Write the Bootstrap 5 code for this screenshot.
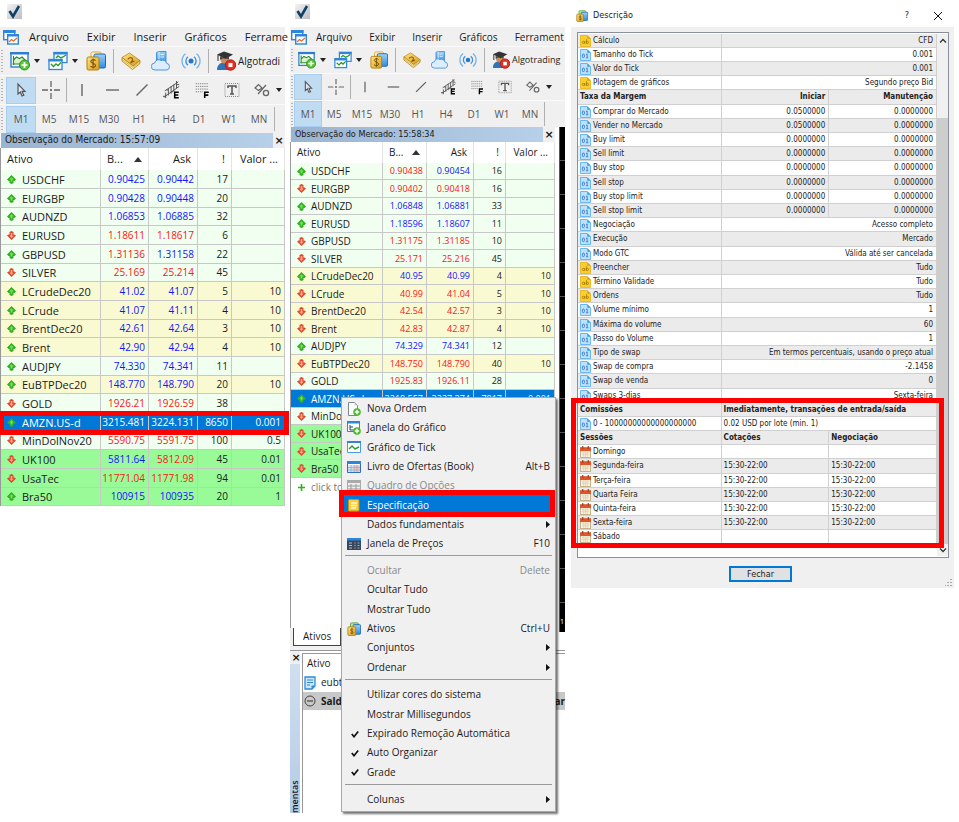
<!DOCTYPE html>
<html lang="pt-BR">
<head>
<meta charset="utf-8">
<meta name="viewport" content="width=device-width, initial-scale=1">
<title>Especificação do ativo</title>
<link href="https://cdn.jsdelivr.net/npm/bootstrap@5.3.0/dist/css/bootstrap.min.css" rel="stylesheet">
<style>
body{font-family:"Open Sans","Noto Sans",sans-serif;color:#1a1a1a;background:#fff}
.board{display:grid;grid-template-columns:285fr 275fr 384fr;column-gap:5px;min-height:100vh;padding:0 5px 9px 0}
button{border:0;background:none;padding:0;color:inherit;font:inherit}
svg{display:block;flex:none}
.win{--cell:30px;--ic:20px;--fs:11px;--num:10px;font-size:var(--fs);min-width:0}
.win.compact{--cell:28px;--ic:18px;--fs:10px;--num:9px}
.brand{height:27px;padding:4px 7px}
.compact .brand{padding-left:5px}
.menubar{background:#f0f0f0;height:19px;line-height:18px;gap:18px;padding-left:3px;white-space:nowrap}
.compact .menubar{gap:17px;padding-left:1px}
.menubar a{color:#1a1a1a;text-decoration:none}
.menubar svg{margin-right:-8px}
.bar{background:#f0f0f0;height:29px;border-top:1px solid #fafafa;white-space:nowrap}
.compact .bar{height:27px}
.grip{width:2px;height:22px;flex:none;margin-left:1px;background:repeating-linear-gradient(#b4b4b4 0 1px,transparent 1px 3px)}
.tools{gap:8px;padding-left:7px}
.compact .tools{padding-left:5px}
.tools .vsep{margin:0 -1px}
.algo{font-size:10px;gap:2px}
.compact .algo{font-size:9px}
.drop{gap:4px}
.wide{gap:10px}
.vsep{width:1px;height:24px;background:#b0b0b0;flex:none}
.cells{padding-left:3px}
.compact .cells{padding-left:1px}
.cells button{width:var(--cell);height:27px;flex:none;font-size:10px;color:#555}
.compact .cells button{height:26px}
.cells .on{background:#c0dcf3;box-shadow:inset 0 0 0 1px #a9cff0}
.frames .on{margin-right:-2px}
.cells svg.tail{margin-left:-1px}
.caption{height:15px;line-height:14px;background:linear-gradient(90deg,#99b4d1,#b9d1ea);font-family:"DejaVu Sans Condensed","Noto Sans",sans-serif;font-size:10px;padding-left:4px;margin-left:1px}
.compact .caption{font-size:9px}
.caption button,.xbtn{font:bold 11px/13px "DejaVu Sans",sans-serif;width:12px}
.caption button{background:#f0f0f0;height:15px}
.quotes{width:100%;table-layout:fixed;border-left:1px solid #999;border-collapse:separate;border-spacing:0}
.quotes th{font-weight:400;height:22px;line-height:20px;padding:0 6px;border-right:1px solid #e3e3e3;white-space:nowrap}
.compact .quotes th{height:21px;line-height:19px}
.quotes td{font-size:var(--num);line-height:17px;height:19px;padding:0 3px 0 0;border-right:1px solid #c8c8c8;border-bottom:1px solid #c8c8c8;text-align:right;white-space:nowrap}
.quotes tr:nth-child(3n) td{height:18px}
.compact .quotes tr:nth-child(odd) td{line-height:16px;height:17px}
.compact .quotes tr:nth-child(even) td{line-height:16px;height:18px}
.quotes td:first-child{font-size:var(--fs);text-align:left;padding-left:6px}
.sym{gap:6px}
.compact .sym{gap:5px}
.bg-a{background:#f0fff0}.bg-b{background:#fafad2}.bg-c{background:#98fb98}.bg-s{background:#0078d7;color:#fff}
.up{color:#1414ff}.dn{color:#ff1414}
.bg-s .up,.bg-s .dn{color:#fff}
.marked{position:relative}
.marked .frame{position:absolute;border:5px solid #f00;pointer-events:none;z-index:3}
.row-frame{inset:-2px -4px -3px -2px}
.market{position:relative;width:265px;background:#f0f0f0}
.sheet{background:#fff;border-left:1px solid #999}
.adder{color:#777;height:18px;padding-left:6px;gap:5px}
.tabline{height:22px;padding-left:3px}
.tabline button{background:#fff;border:1px solid #444;border-top:0;height:18px;padding:0 9px;margin-bottom:4px}
.chart{background:#000;width:6px;margin-bottom:18px;border-left:1px solid #555;color:#fff;font-size:7px;line-height:20px}
.ticks{background:repeating-linear-gradient(transparent 0 33px,#555 33px 34px)}
.dock{border-top:1px solid #999;min-height:163px}
.side{width:10px;background:#f0f0f0}
.side .strip{background:linear-gradient(#b4cbe6,#cfdff0);writing-mode:vertical-rl;transform:rotate(180deg);font-size:9px;line-height:10px;font-weight:600}
.orders{border:1px solid #999;margin:2px 0 0 2px;background:#fff;border-right:0;border-bottom:0}
.orders div{height:19px;padding-left:1px;gap:5px}
.orders .sum{background:#c8c8c8;font-weight:700;height:18px}
.ctx{position:absolute;left:51px;top:270px;width:215px;z-index:4;background:#f0f0f0;border:1px solid #a8a8a8;padding:1px 1px 2px;box-shadow:2px 2px 2px rgba(0,0,0,.55);margin:0;list-style:none;font-size:10px}
.ctx button{display:flex;align-items:center;width:100%;height:19px;padding:0 4px;text-align:left}
.ctx li:nth-child(3n) button{height:20px}
.ctx .ico{width:20px;flex:none}
.ctx hr{margin:2px 2px 5px;border:0;border-top:1px solid #999;opacity:1}
.ctx .sel{background:#0078d7;color:#fff}
.ctx .off{color:#888}
.item-frame{inset:-5px -1px -2px -4px}
.dlg{margin-left:1px;font-family:"DejaVu Sans Condensed","Noto Sans",sans-serif;font-size:8px;color:#222;align-self:start}
.dlg-head{height:27px;padding:5px 12px 0 5px;gap:5px;font-size:9px}
.dlg-body{background:#f0f0f0;padding:5px 5px 6px 6px;position:relative}
.listbox{border:1px solid #8a8f99;background:#fff;padding:1px 0 12px;position:relative}
.props{flex:1;table-layout:fixed;border-collapse:separate;border-spacing:0;width:100%}
.props td,.props th{height:14px;line-height:12px;padding:0 3px 0 2px;border-right:1px solid #d0d0d0;border-bottom:1px solid #d0d0d0;white-space:nowrap}
.props tr:nth-child(5n) td,.props tr:nth-child(5n) th{height:15px}
.props .num{text-align:right}
.props .name{gap:2px}
.shade{background:#ebebeb}
.block-frame{inset:-5px -7px -3px -7px}
.scroll{width:11px;background:#f0f0f0;margin-bottom:-11px}
.thumb{background:#cdcdcd;margin-top:84px;margin-bottom:12px;flex:1}
.scroll svg{position:absolute;right:1px}
.close-btn{font-size:9px;border:2px solid #0078d7;background:#e1e1e1;width:63px;height:16px;line-height:11px}
.close-row{padding:8px 5px 0 0}
.resize{position:absolute;right:2px;bottom:2px}
</style>
</head>
<body>
<svg width="0" height="0" class="position-absolute" aria-hidden="true">
<defs>
<linearGradient id="gold" x1="0" y1="0" x2="1" y2="1"><stop offset="0" stop-color="#ffe680"/><stop offset="1" stop-color="#d99a1c"/></linearGradient>
<linearGradient id="blue" x1="0" y1="0" x2="0" y2="1"><stop offset="0" stop-color="#9ad2fb"/><stop offset="1" stop-color="#2f8be0"/></linearGradient>
<linearGradient id="steel" x1="0" y1="0" x2="1" y2="1"><stop offset="0" stop-color="#f4f4f4"/><stop offset="1" stop-color="#b9bdc2"/></linearGradient>
<symbol id="logo" viewBox="0 0 15 15"><path fill="url(#steel)" d="M0 0h15v15H0z"/><path d="M2.500 7l3.500 5.500L12 2" fill="none" stroke="#123f66" stroke-width="2.600"/></symbol>
<symbol id="app" viewBox="0 0 16 16"><rect x=".7" y="1.700" width="11" height="9" fill="#fff" stroke="#2c86dd" stroke-width="1.400"/><path fill="#2c86dd" d="M0 1h12.500v3H0zM4 5h12v3H4z"/><rect x="4.700" y="6" width="10.600" height="9" fill="#fff" stroke="#2c86dd" stroke-width="1.400"/><path fill="#2c86dd" d="M4 5h12v2.500H4z"/><path d="M6 13l2.500-2.500 2 1.500 3.500-3" fill="none" stroke="#f0642d" stroke-width="1.300"/></symbol>
<symbol id="newchart" viewBox="0 0 20 20"><rect x="1" y="2" width="17" height="14" fill="#fff" stroke="#2c7fce" stroke-width="1.400"/><path fill="#2c7fce" d="M0 1h19v2.500H0z"/><path d="M4 9l3-3 3 2 2-2 4 4v3H4z" fill="#d9f2d0"/><path d="M3.500 5v9M2.500 13h13M3.500 9l3-3 3 1.500L12 6l4 4" fill="none" stroke="#2a8a2a" stroke-width="1.200"/><circle cx="14.500" cy="14" r="5" fill="#5cc43c" stroke="#2f9020"/><path d="M14.500 11v6M11.500 14h6" stroke="#fff" stroke-width="1.700"/></symbol>
<symbol id="charts" viewBox="0 0 20 20"><rect x="6" y="1.500" width="13" height="10" fill="#fff" stroke="#2c86dd" stroke-width="1.300"/><path fill="#2c86dd" d="M5.500 1h14v2.500h-14z"/><path d="M8 7l2-2 3 2 2-1 3-2" fill="none" stroke="#2a9a2a" stroke-width="1.400"/><rect x="1" y="8.500" width="13" height="10" fill="#fff" stroke="#2c86dd" stroke-width="1.300"/><path fill="#2c86dd" d="M.5 8h14v2.500H.5z"/><path d="M3 13l2.500 2.500L8 13l2 1.500 3-3" fill="none" stroke="#2a9a2a" stroke-width="1.400"/></symbol>
<symbol id="dollar" viewBox="0 0 20 20"><rect x="5" y="1" width="10" height="13" rx="1.500" fill="#fff6cf" stroke="#d9a940"/><rect x="8" y="3" width="11.500" height="14" rx="1.500" fill="url(#blue)" stroke="#1c67b8"/><rect x="1" y="6" width="12" height="13" rx="1.500" fill="url(#gold)" stroke="#b47e12"/><path d="M9.500 9.500C8 8 4.800 8.500 4.800 10.500s4.700 1.700 4.700 4-3.500 2.200-5 .7M7.100 7.500v10" fill="none" stroke="#7b5208" stroke-width="1.100"/></symbol>
<symbol id="assets" viewBox="0 0 16 16"><rect x="4" y="1" width="9" height="10" rx="1" fill="#bfe8a0" stroke="#4aa02c"/><rect x="7" y="3" width="8.500" height="11" rx="1" fill="url(#blue)" stroke="#1c67b8"/><rect x="1" y="5.500" width="9" height="9.800" rx="1" fill="url(#gold)" stroke="#b47e12"/><path d="M7.300 8.500c-1-.9-3.400-.5-3.400.8s3.400 1 3.400 2.400-2.500 1.500-3.600.5M5.600 7v7" fill="none" stroke="#7b5208" stroke-width=".9"/></symbol>
<symbol id="book" viewBox="0 0 20 20"><path d="M1 6.500L8.500 2 19 9.500 12 15z" fill="url(#gold)" stroke="#b98a1c" stroke-width=".8"/><path d="M1 6.500v3.500l10.500 8.500L19 12.500V9.500l-7 5.500z" fill="#ffe9a0" stroke="#a9780f" stroke-width=".8"/><path d="M1 8.300l10.700 8.200L19 11" fill="none" stroke="#c9992c" stroke-width=".7"/><path d="M7 8.500c0-2 4-2.500 4.500-.5s-1.500 2-1.500 3.500l3.500-1.500" fill="none" stroke="#8a5e08" stroke-width="1.200"/></symbol>
<symbol id="cloud" viewBox="0 0 20 20"><path d="M5.500 1.500L8 .5h7V13H5.500z" fill="url(#blue)" stroke="#2f80cf" stroke-width=".8"/><path d="M8 .7V11M9.500 3.500H13M9.500 6H13" stroke="#e8f5ff" stroke-width=".9"/><path d="M4 19a3.500 3.500 0 01-.3-7A4 4 0 0110 9.500a4 4 0 015.500 2.700A3.500 3.500 0 0116 19z" fill="#dceefd" stroke="#4b96da"/></symbol>
<symbol id="radio" viewBox="0 0 20 20"><circle cx="10" cy="10" r="2.500" fill="#2674d0"/><path d="M7 5.800a5.200 5.200 0 000 8.400M13 5.800a5.200 5.200 0 010 8.400" fill="none" stroke="#3f8ee0" stroke-width="1.400"/><path d="M4.500 2.800a9.200 9.200 0 000 14.400M15.500 2.800a9.200 9.200 0 010 14.400" fill="none" stroke="#79b4ec" stroke-width="1.400"/></symbol>
<symbol id="algo" viewBox="0 0 20 20"><path d="M1 19c0-5 3-7.500 7-7.500s7 2.500 7 7.500z" fill="#2f73ba"/><circle cx="8.500" cy="8.500" r="4" fill="#c98d62"/><path d="M1 3.500L8 .5 17 3.500 9.500 8z" fill="#333"/><path d="M4 5v4c2-2 6-2 9-.5V5L9.500 8z" fill="#4a4a4a"/><path d="M2 4v6" stroke="#222"/><circle cx="14.500" cy="14" r="5.200" fill="#e33022" stroke="#b31b10"/><path fill="#fff" d="M12.500 12h4v4h-4z"/></symbol>
<symbol id="cursor" viewBox="0 0 18 18"><path d="M6 3v10l2.400-2L10 15l1.800-.8-1.700-3.800H13z" fill="#dfe8f0" stroke="#555" stroke-width="1.200"/></symbol>
<symbol id="cross" viewBox="0 0 18 18"><path d="M9 0v6M9 12v6M0 9h6M12 9h6M9 8v2M8 9h2" stroke="#666" stroke-width="1.300"/></symbol>
<symbol id="vline" viewBox="0 0 18 18"><path d="M9 3v12" stroke="#666" stroke-width="1.400"/></symbol>
<symbol id="hline" viewBox="0 0 18 18"><path d="M3 9h13" stroke="#666" stroke-width="1.400"/></symbol>
<symbol id="slash" viewBox="0 0 18 18"><path d="M3.500 14.500l11-11" stroke="#666" stroke-width="1.500"/></symbol>
<symbol id="chan" viewBox="0 0 20 20"><path d="M2 11L17 1M1 18L18 6M3 13v6M6 9v7M9 6v8M12 4v8M15 0v8M0 17h3M4 10h2M9 12h2M15 4h3" stroke="#555" stroke-width="1.100"/><path d="M17.500 12.500H13v6h4.500M13 15.500h4" fill="none" stroke="#000" stroke-width="1.700"/></symbol>
<symbol id="fibo" viewBox="0 0 20 20"><path d="M3 3h14M3 6h14M3 9h14M3 12h8" stroke="#777" stroke-dasharray="1.400 1"/><path d="M13 19v-6.500h4.500M13 15.700h4" fill="none" stroke="#000" stroke-width="1.700"/></symbol>
<symbol id="txt" viewBox="0 0 18 18"><rect x="2" y="2.500" width="14" height="13" fill="none" stroke="#888" stroke-dasharray="1 1"/><path d="M5 7V5h8v2M9 5v8M7 13h4" fill="none" stroke="#555" stroke-width="1.500"/></symbol>
<symbol id="shapes" viewBox="0 0 18 18"><path d="M2 7l3.500-3.500L9 7 5.500 9.500zM5 13l8-9" fill="none" stroke="#666" stroke-width="1.200"/><circle cx="13" cy="12" r="2.600" fill="none" stroke="#666" stroke-width="1.300"/></symbol>
<symbol id="caret" viewBox="0 0 6 4"><path d="M0 0h6L3 4z" fill="#222"/></symbol>
<symbol id="up" viewBox="0 0 9 9"><path d="M4.500 0L9 4.500 7.500 6H6.500v2l-2 1-2-1V6h-1L0 4.500z" fill="#2fb01c"/><path d="M4.500 2.200L6.700 4.500H5.300v2H3.700v-2H2.300z" fill="#7bdc66"/></symbol>
<symbol id="dn" viewBox="0 0 9 9"><path d="M4.500 9L9 4.500 7.500 3.500H6.500V1l-2-1-2 1v2.500h-1L0 4.500z" fill="#e0492c"/><path d="M4.500 7L6.500 4.800H5.300V2H3.700v2.800H2.500z" fill="#ffa68e"/></symbol>
<symbol id="plus" viewBox="0 0 9 9"><path d="M4.500 1v7M1 4.500h7" stroke="#2db31c" stroke-width="1.600"/></symbol>
<symbol id="num" viewBox="0 0 12 13"><path d="M.5.500H8L11.500 4v8.500H.5z" fill="#bfe2fc" stroke="#5cb4f2"/><path d="M8 .5V4h3.500z" fill="#2e9be8"/><rect x="2.600" y="5.500" width="2.200" height="3.800" rx="1" fill="none" stroke="#2a6fc8" stroke-width=".9"/><path d="M6.500 6l1.300-.7v4M6.500 9.500H9" fill="none" stroke="#2a6fc8" stroke-width=".9"/></symbol>
<symbol id="str" viewBox="0 0 12 13"><path d="M.5.500H8L11.500 4v8.500H.5z" fill="#f9cf2f" stroke="#e8b820"/><path d="M8 .5V4h3.500z" fill="#d9a010"/><circle cx="3.700" cy="8" r="1.200" fill="none" stroke="#9c7208" stroke-width=".8"/><path d="M5.200 6.500v3M7 4.500v5" stroke="#9c7208" stroke-width=".8"/><circle cx="8.200" cy="8" r="1.200" fill="none" stroke="#9c7208" stroke-width=".8"/></symbol>
<symbol id="cal" viewBox="0 0 12 13"><rect x=".5" y="1.500" width="11" height="11" fill="#faf3e0" stroke="#c2ab84"/><path d="M0 1.500h12v4H0z" fill="#e2552a"/><path d="M3 0v3M9 0v3" stroke="#9a3312" stroke-width="1.200"/><path d="M2 7.500h8M2 9.500h8M4 6v6M6 6v6M8 6v6" stroke="#dccba8" stroke-width=".7"/></symbol>
<symbol id="doc" viewBox="0 0 14 14"><path d="M1.500.5h6l3 3v10h-9z" fill="#fff" stroke="#7a8794"/><path d="M7.500.5v3h3z" fill="#ccd"/><circle cx="10" cy="10" r="3.800" fill="#4cb82d"/><path d="M10 7.800v4.400M7.800 10h4.400" stroke="#fff" stroke-width="1.400"/></symbol>
<symbol id="win" viewBox="0 0 14 14"><path d="M.5.500h12v10H.5z" fill="#fff" stroke="#2c86dd"/><path d="M0 0h13v2.500H0z" fill="#2c86dd"/><path d="M3 4v5h4M3 6h3" fill="none" stroke="#246"/><circle cx="10" cy="10" r="3.800" fill="#4cb82d"/><path d="M10 7.800v4.400M7.800 10h4.400" stroke="#fff" stroke-width="1.400"/></symbol>
<symbol id="tick" viewBox="0 0 14 14"><path d="M.5 1.500h13v11H.5z" fill="#fff" stroke="#4d9be0"/><path d="M0 1h14v2H0z" fill="#2c86dd"/><path d="M2 9l3-3 3 3 4-2" fill="none" stroke="#2a9a2a" stroke-width="1.400"/></symbol>
<symbol id="dom" viewBox="0 0 14 14"><path d="M.5 1.500h13v11H.5z" fill="#fff" stroke="#2c6fbe"/><path d="M0 1h14v3H0z" fill="#2c86dd"/><path d="M1 5h6v7H1z" fill="#d6e8fa"/><path d="M7 5h6v7H7z" fill="#fbcabf"/><path d="M1 7.500h12M1 10h12M4 5v7M7 5v7M10 5v7" stroke="#8aa4c4" stroke-width=".7"/></symbol>
<symbol id="opts" viewBox="0 0 14 14"><path d="M.5 1.500h13v11H.5z" fill="#eee" stroke="#aaa"/><path d="M0 1h14v3H0z" fill="#aaa"/><path d="M1 7h12M1 10h12M4 5v7M9 5v7" stroke="#999"/></symbol>
<symbol id="spec" viewBox="0 0 14 14"><rect x="1.500" y="1.500" width="10.500" height="11.500" rx="1" fill="#f8cf3a" stroke="#c98f12"/><path d="M4 5h6M4 7.500h6M4 10h5" stroke="#fff8dc" stroke-width="1.300"/></symbol>
<symbol id="prices" viewBox="0 0 14 14"><path d="M0 1h14v12H0z" fill="#35485c"/><path d="M0 1h14v2.500H0z" fill="#2c86dd"/><path d="M2 6h3M2 8.500h3M2 11h3" stroke="#9cc3ea"/><path d="M7 6h2M7 8.500h2M7 11h2" stroke="#c66"/><path d="M10.500 6h2M10.500 8.500h2M10.500 11h2" stroke="#8ab"/></symbol>
<symbol id="check" viewBox="0 0 8 8"><path d="M.8 4l2.200 2.700L7.200 1.500" fill="none" stroke="#111" stroke-width="1.700"/></symbol>
<symbol id="arrow" viewBox="0 0 4 7"><path d="M0 0l4 3.500L0 7z" fill="#111"/></symbol>
<symbol id="page" viewBox="0 0 12 14"><path d="M1 1h10v9l-3 3H1z" fill="#cfe7fb" stroke="#2e8bd8" stroke-width="1.300"/><path d="M3 4h6M3 6.500h6M3 9h3" stroke="#2e8bd8"/><path d="M11 9.500H7.500V13z" fill="#2e8bd8"/></symbol>
<symbol id="minus" viewBox="0 0 12 12"><circle cx="6" cy="6" r="5" fill="none" stroke="#444"/><path d="M3 6h6" stroke="#444" stroke-width="1.200"/></symbol>
</defs>
</svg>

<main class="board">
  <section class="win" id="left" aria-label="Observação do Mercado 15:57:09"></section>
  <section class="win compact d-flex flex-column" id="middle" aria-label="Observação do Mercado 15:58:34"></section>
  <section class="dlg" aria-label="Descrição">
    <header class="dlg-head d-flex align-items-center">
      <svg width="12" height="12"><use href="#assets"/></svg><span>Descrição</span>
      <button class="ms-auto me-1" aria-label="Ajuda">?</button>
      <button class="ms-3" aria-label="Fechar janela"><svg width="8" height="8" viewBox="0 0 8 8"><path d="M0 0l8 8M8 0L0 8" stroke="#111"/></svg></button>
    </header>
    <div class="dlg-body">
      <div class="listbox d-flex">
        <table class="props" id="props"><colgroup><col style="width:40%"><col style="width:30%"><col style="width:30%"></colgroup></table>
        <div class="scroll d-flex flex-column">
          <svg class="mt-1" width="8" height="5" viewBox="0 0 8 5"><path d="M1 4.500l3-3 3 3" fill="none" stroke="#333" stroke-width="1.300"/></svg>
          <div class="thumb"></div>
          <svg class="bottom-0 mb-1" width="8" height="5" viewBox="0 0 8 5"><path d="M1 .5l3 3 3-3" fill="none" stroke="#333" stroke-width="1.300"/></svg>
        </div>
      </div>
      <div class="close-row text-center"><button class="close-btn">Fechar</button></div>
      <svg class="resize" width="7" height="7" viewBox="0 0 7 7"><path d="M5 0h2v1H5zM2 3h2v1H2zM5 3h2v1H5zM0 6h1v1H0zM2 6h2v1H2zM5 6h2v1H5z" fill="#aaa"/></svg>
    </div>
  </section>
</main>

<script>
const icon = (id, w, h = w) => `<svg width="${w}" height="${h}" aria-hidden="true"><use href="#${id}"/></svg>`;

function chrome(ic, lastMenu, algo) {
  const drop = id => `<button class="drop d-flex align-items-center" aria-label="${id}">${icon(id, ic)}${icon('caret', 6, 4)}</button>`;
  const btn = id => `<button aria-label="${id}">${icon(id, ic)}</button>`;
  const cell = (id, on) => `<button class="d-flex align-items-center justify-content-center ${on ? 'on' : ''}" aria-label="${id}">${icon(id, ic - 2)}</button>`;
  return `
  <div class="brand">${icon('logo', 15)}</div>
  <nav class="menubar d-flex align-items-center">${icon('app', 16)}
    ${['Arquivo', 'Exibir', 'Inserir', 'Gráficos', lastMenu].map(t => `<a href="#">${t}</a>`).join('')}</nav>
  <div class="bar d-flex align-items-center"><i class="grip"></i>
    <div class="tools d-flex align-items-center">${drop('newchart')}${drop('charts')}${btn('dollar')}<i class="vsep"></i>
      <div class="wide d-flex">${btn('book')}${btn('cloud')}${btn('radio')}</div><i class="vsep"></i>
      <button class="algo d-flex align-items-center">${icon('algo', ic)}${algo}</button></div></div>
  <div class="bar d-flex align-items-center"><i class="grip"></i>
    <div class="cells d-flex align-items-center">${cell('cursor', 1)}${cell('cross')}<i class="vsep"></i>
      ${['vline', 'hline', 'slash', 'chan', 'fibo', 'txt', 'shapes'].map(i => cell(i)).join('')}<svg class="tail" width="6" height="4"><use href="#caret"/></svg></div></div>
  <div class="bar d-flex align-items-center"><i class="grip"></i>
    <div class="cells frames d-flex align-items-center">
      ${['M1', 'M5', 'M15', 'M30', 'H1', 'H4', 'D1', 'W1', 'MN'].map((t, i) => `<button class="${i ? '' : 'on'}">${t}</button>`).join('')}<i class="vsep"></i></div></div>`;
}

function quotes(rows, widths, marked) {
  return `<table class="quotes"><colgroup><col>${widths.map(w => `<col style="width:${w}px">`).join('')}</colgroup>
  <thead><tr><th>Ativo</th><th><div class="d-flex align-items-center justify-content-between">B... <svg width="8" height="5" viewBox="0 0 8 5"><path d="M0 5l4-5 4 5z" fill="#333"/></svg></div></th><th class="text-end">Ask</th><th class="text-end">!</th><th class="text-end">Valor ...</th></tr></thead>
  <tbody>${rows.trim().split('\n').map(line => {
    const [bg, dir, name, bid, ask, spread, value] = line.trim().split('|');
    const price = p => `<td class="${p[0] === '-' ? 'dn' : 'up'}">${p.slice(1)}</td>`;
    const hit = bg === 's' && marked;
    return `<tr class="bg-${bg} ${hit ? 'marked' : ''}"><td><div class="sym d-flex align-items-center">${icon(dir, 9)}${name}</div>${hit ? '<i class="frame row-frame"></i>' : ''}</td>${price(bid)}${price(ask)}<td>${spread}</td><td>${value}</td></tr>`;
  }).join('')}</tbody></table>`;
}

const caption = time => `<div class="caption d-flex justify-content-between"><span>Observação do Mercado: ${time}</span><button aria-label="Fechar">×</button></div>`;

document.getElementById('left').innerHTML = chrome(20, 'Ferrame', 'Algotradi') + caption('15:57:09') +
  `<div>${quotes(`a|up|USDCHF|+0.90425|+0.90442|17|
  a|up|EURGBP|+0.90428|+0.90448|20|
  a|up|AUDNZD|+1.06853|+1.06885|32|
  a|dn|EURUSD|-1.18611|-1.18617|6|
  a|up|GBPUSD|-1.31136|+1.31158|22|
  a|dn|SILVER|-25.169|-25.214|45|
  b|up|LCrudeDec20|+41.02|+41.07|5|10
  b|up|LCrude|+41.07|+41.11|4|10
  b|up|BrentDec20|+42.61|+42.64|3|10
  b|up|Brent|+42.90|+42.94|4|10
  a|up|AUDJPY|+74.330|+74.341|11|
  b|up|EuBTPDec20|+148.770|+148.790|20|10
  a|dn|GOLD|-1926.21|-1926.59|38|
  s|up|AMZN.US-d|+3215.481|+3224.131|8650|0.001
  a|dn|MinDolNov20|-5590.75|-5591.75|100|0.5
  c|dn|UK100|+5811.64|-5812.09|45|0.01
  c|dn|UsaTec|-11771.04|-11771.98|94|0.01
  c|up|Bra50|+100915|+100935|20|1`, [48, 49, 34, 53], true)}</div>`;

const menu = [
  ['Nova Ordem', 'doc'], ['Janela do Gráfico', 'win'], ['Gráfico de Tick', 'tick'], ['Livro de Ofertas (Book)', 'dom', 'Alt+B'],
  ['Quadro de Opções', 'opts', '', 'off'], ['Especificação', 'spec', '', 'sel'], ['Dados fundamentais', '', '>'], ['Janela de Preços', 'prices', 'F10'], null,
  ['Ocultar', '', 'Delete', 'off'], ['Ocultar Tudo'], ['Mostrar Tudo'], ['Ativos', 'assets', 'Ctrl+U'], ['Conjuntos', '', '>'], ['Ordenar', '', '>'], null,
  ['Utilizar cores do sistema'], ['Mostrar Millisegundos'], ['Expirado Remoção Automática', 'check'], ['Auto Organizar', 'check'], ['Grade', 'check'], null,
  ['Colunas', '', '>']
];
const menuHtml = `<ul class="ctx">${menu.map(m => {
  if (!m) return '<li><hr></li>';
  const [text, ic, key, cls] = m;
  const pic = ic === 'check' ? icon('check', 8) : ic ? icon(ic, 14) : '';
  return `<li class="${cls === 'sel' ? 'marked' : ''}"><button class="${cls || ''}"><span class="ico ${ic === 'check' ? 'ps-1' : ''}">${pic}</span>${text}<span class="ms-auto">${key === '>' ? icon('arrow', 4, 7) : key || ''}</span></button>${cls === 'sel' ? '<i class="frame item-frame"></i>' : ''}</li>`;
}).join('')}</ul>`;

document.getElementById('middle').innerHTML = chrome(18, 'Ferrament', 'Algotrading') +
  `<div class="d-flex flex-grow-1 justify-content-between">
    <div class="market d-flex flex-column">${caption('15:58:34')}
      <div class="bg-white">${quotes(`a|up|USDCHF|-0.90438|+0.90454|16|
      a|dn|EURGBP|-0.90402|-0.90418|16|
      a|up|AUDNZD|+1.06848|+1.06881|33|
      a|up|EURUSD|+1.18596|+1.18607|11|
      a|dn|GBPUSD|-1.31175|-1.31185|10|
      a|dn|SILVER|-25.171|-25.216|45|
      b|up|LCrudeDec20|+40.95|+40.99|4|10
      b|dn|LCrude|-40.99|-41.04|5|10
      b|dn|BrentDec20|-42.54|-42.57|3|10
      b|dn|Brent|-42.83|-42.87|4|10
      a|up|AUDJPY|+74.329|+74.341|12|
      b|dn|EuBTPDec20|-148.750|-148.790|40|10
      a|dn|GOLD|-1925.83|-1926.11|28|
      s|up|AMZN.US-d|+3219.557|+3227.374|7817|0.001
      a|dn|MinDol|+|+||
      c|dn|UK100|+|+||
      c|dn|UsaTec|+|+||
      c|dn|Bra50|+|+||`, [44, 47, 32, 49])}</div>
      <div class="sheet flex-grow-1"><div class="adder d-flex align-items-center">${icon('plus', 9)}click to</div></div>
      <div class="tabline"><button>Ativos</button></div>
      ${menuHtml}
    </div>
    <div class="chart d-flex flex-column"><div class="ticks flex-grow-1"></div><span>1</span></div>
  </div>
  <div class="dock d-flex">
    <div class="side d-flex flex-column"><button class="xbtn">×</button><div class="strip flex-grow-1">mentas</div></div>
    <div class="orders flex-grow-1">
      <div class="d-flex align-items-center ps-1">Ativo</div>
      <div class="d-flex align-items-center">${icon('page', 12, 14)}eubt</div>
      <div class="sum d-flex align-items-center justify-content-between">${icon('minus', 12)}<span class="me-auto">Sald</span><span>ar</span></div>
    </div>
  </div>`;

const props = `str|Cálculo|CFD
num|Tamanho do Tick|0.001
num|Valor do Tick|0.001
str|Plotagem de gráficos|Segundo preço Bid
h|Taxa da Margem|Iniciar|Manutenção
num|Comprar do Mercado|0.0500000|0.0000000
num|Vender no Mercado|0.0500000|0.0000000
num|Buy limit|0.0000000|0.0000000
num|Sell limit|0.0000000|0.0000000
num|Buy stop|0.0000000|0.0000000
num|Sell stop|0.0000000|0.0000000
num|Buy stop limit|0.0000000|0.0000000
num|Sell stop limit|0.0000000|0.0000000
num|Negociação|Acesso completo
num|Execução|Mercado
num|Modo GTC|Válida até ser cancelada
str|Preencher|Tudo
str|Término Validade|Tudo
str|Ordens|Tudo
num|Volume mínimo|1
num|Máxima do volume|60
num|Passo do Volume|1
num|Tipo de swap|Em termos percentuais, usando o preço atual
num|Swap de compra|-2.1458
num|Swap de venda|0
num|Swaps 3-dias|Sexta-feira`.split('\n');
const sessions = `h|Comissões|Imediatamente, transações de entrada/saída
num|0 - 10000000000000000000|0.02 USD por lote (min. 1)
h|Sessões|Cotações|Negociação
cal|Domingo||
cal|Segunda-feira|15:30-22:00|15:30-22:00
cal|Terça-feira|15:30-22:00|15:30-22:00
cal|Quarta Feira|15:30-22:00|15:30-22:00
cal|Quinta-feira|15:30-22:00|15:30-22:00
cal|Sexta-feira|15:30-22:00|15:30-22:00
cal|Sábado||`.split('\n');
const propRow = (align, framed) => (line, i) => {
  const [kind, name, ...vals] = line.split('|');
  const tag = kind === 'h' ? 'th' : 'td';
  const first = kind === 'h' ? name : `<div class="name d-flex align-items-center">${icon(kind, 11, 12)}${name}</div>`;
  const frame = framed && i === 0 ? '<i class="frame block-frame"></i>' : '';
  return `<tr class="${i % 2 ? '' : 'shade'}"><${tag}>${first}${frame}</${tag}>${vals.map(v => `<${tag} class="${align}" ${vals.length === 1 ? 'colspan="2"' : ''}>${v}</${tag}>`).join('')}</tr>`;
};
document.getElementById('props').insertAdjacentHTML('beforeend',
  `<tbody>${props.map(propRow('num')).join('')}</tbody><tbody class="marked">${sessions.map(propRow('', true)).join('')}</tbody>`);
</script>
<script src="https://cdn.jsdelivr.net/npm/bootstrap@5.3.0/dist/js/bootstrap.bundle.min.js"></script>
</body>
</html>
